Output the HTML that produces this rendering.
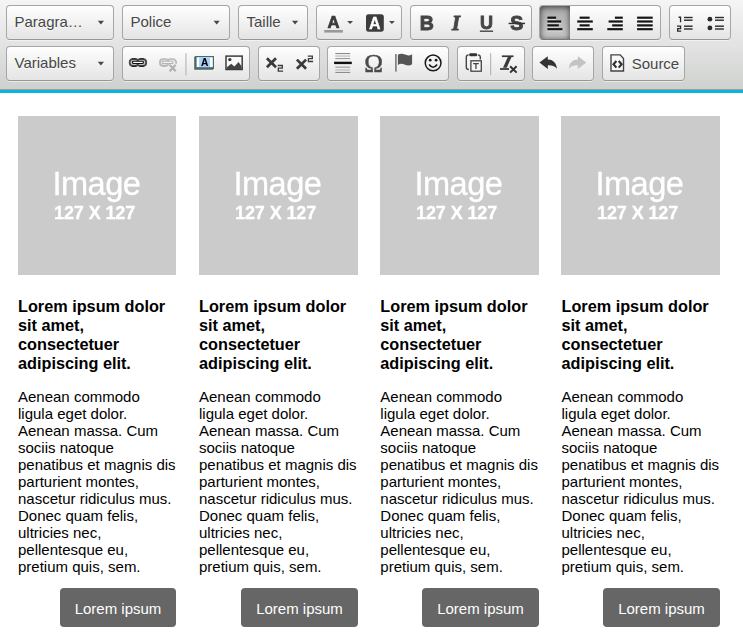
<!DOCTYPE html>
<html lang="fr">
<head>
<meta charset="utf-8">
<title>Editor</title>
<style>
html,body{margin:0;padding:0;background:#fff;}
body{width:743px;height:638px;overflow:hidden;position:relative;font-family:"Liberation Sans",Arial,Helvetica,sans-serif;}
#top{position:absolute;left:0;top:0;width:743px;height:89px;background:linear-gradient(to bottom,#f5f5f5 0,#cfd1cf 100%);}
#blue{position:absolute;left:0;top:89px;width:743px;height:4px;background:linear-gradient(to bottom,#a39c9b 0,#a39c9b 1px,#0fb4da 1px,#0fb4da 2px,#05b6de 2px,#05b6de 4px);}
.grp{position:absolute;height:33px;box-sizing:content-box;border:1px solid #a6a6a6;border-bottom-color:#979797;border-radius:4px;
 background:linear-gradient(to bottom,#ffffff,#e4e4e4);box-shadow:0 1px 0 rgba(255,255,255,.5),0 0 2px rgba(255,255,255,.15) inset,0 1px 0 rgba(255,255,255,.15) inset;}
.r1{top:5px}.r2{top:46px}
.txt{position:absolute;left:7.5px;top:-1px;line-height:33px;font-size:15px;color:#474747;text-shadow:0 1px 0 rgba(255,255,255,.5);white-space:nowrap;}
.arr{position:absolute;top:15px;width:0;height:0;border-left:4px solid transparent;border-right:4px solid transparent;border-top:4px solid #474747;}
.ico{position:absolute;top:6px;width:20px;height:20px;}
.on{position:absolute;top:0;left:0;width:30px;height:33px;border-radius:3px 0 0 3px;background:linear-gradient(to bottom,#aaaaaa,#cacaca);box-shadow:0 1px 6px rgba(0,0,0,.7) inset,0 1px 0 rgba(0,0,0,.2);}
.sep{position:absolute;top:7px;width:1px;height:20px;background:#c0c0c0;}
.col{position:absolute;top:116px;width:159px;}
.ph{width:159px;height:159px;background:#cbcbcb;position:relative;color:#fff;}
.ph .a{position:absolute;left:34.5px;top:50px;font-size:32.6px;line-height:36px;letter-spacing:-0.55px;filter:blur(0.45px)}
.ph .b{position:absolute;left:36px;top:85.5px;font-size:18px;line-height:22px;font-weight:bold;letter-spacing:-0.1px;filter:blur(0.45px)}
h3{margin:0;white-space:nowrap;position:absolute;top:181px;left:0;font-size:16.25px;line-height:18.75px;font-weight:bold;color:#000;width:160px;}
p{margin:0;white-space:nowrap;position:absolute;top:272px;left:0;font-size:15px;line-height:17px;color:#000;width:162px;}
.btn{position:absolute;top:472px;left:42px;width:117px;height:39px;border-radius:4px;background:#666;color:#fff;font-size:15px;line-height:41px;text-align:center;}
.l4{position:relative;top:1px}
.c3 h3,.c3 p{left:0.3px}.c4 h3,.c4 p{left:0.5px}
.ph span{-webkit-text-stroke:0.3px #fff}
.c1 .ph{width:158px}.c1 .btn{width:116px}
</style>
</head>
<body>
<div id="top"></div>
<div id="blue"></div>

<div class="grp r1" style="left:6px;width:106px"><span class="txt">Paragra…</span></div>
<div class="grp r1" style="left:122px;width:106px"><span class="txt">Police</span></div>
<div class="grp r1" style="left:238px;width:68px"><span class="txt">Taille</span></div>
<div class="grp r1" style="left:316px;width:84px"></div>
<div class="grp r1" style="left:410px;width:120px"></div>
<div class="grp r1" style="left:539px;width:120px"><span class="on"></span></div>
<div class="grp r1" style="left:669px;width:60px"></div>

<div class="grp r2" style="left:6px;width:106px"><span class="txt">Variables</span></div>
<div class="grp r2" style="left:122px;width:126px"></div>
<div class="grp r2" style="left:258px;width:60px"></div>
<div class="grp r2" style="left:327px;width:120px"></div>
<div class="grp r2" style="left:457px;width:66px"></div>
<div class="grp r2" style="left:532px;width:60px"></div>
<div class="grp r2" style="left:602px;width:81px"><span class="txt" style="left:28.7px;top:0">Source</span></div>


<svg id="icons" width="743" height="89" viewBox="0 0 743 89" style="position:absolute;left:0;top:0;overflow:visible">
<g style="filter:blur(0.35px)">
<g fill="#474747">
<path d="M97.8 20.8h6.2l-3.1 3.6z"/>
<path d="M213.6 20.8h6.2l-3.1 3.6z"/>
<path d="M292 20.8h6.2l-3.1 3.6z"/>
<path d="M97.8 61.8h6.2l-3.1 3.6z"/>
</g>
<!-- text color -->
<text x="333.4" y="27.6" font-family="Liberation Sans, sans-serif" font-weight="bold" font-size="16.6" text-anchor="middle" fill="#3a3a3a" stroke="#3a3a3a" stroke-width="0.7">A</text>
<rect x="324.2" y="30" width="18.7" height="2.6" fill="#999"/>
<path d="M347.2 21h5.8l-2.9 3z" fill="#474747"/>
<!-- bg color -->
<rect x="366" y="14.2" width="17.8" height="17.5" rx="2.6" fill="#3c3c3c"/>
<text x="374.9" y="29.3" font-family="Liberation Sans, sans-serif" font-weight="bold" font-size="16" text-anchor="middle" fill="#fff" stroke="#fff" stroke-width="0.3">A</text>
<path d="M389 21h5.8l-2.9 3z" fill="#474747"/>
<!-- B I U S -->
<text x="426.8" y="30" font-family="Liberation Sans, sans-serif" font-weight="bold" font-size="19.5" text-anchor="middle" fill="#444" stroke="#444" stroke-width="0.9">B</text>
<text x="455.9" y="30" font-family="Liberation Serif, serif" font-weight="bold" font-style="italic" font-size="20.5" text-anchor="middle" fill="#444" stroke="#444" stroke-width="0.9">I</text>
<text x="486.5" y="28.6" font-family="Liberation Sans, sans-serif" font-weight="bold" font-size="18" text-anchor="middle" fill="#444" stroke="#444" stroke-width="0.8">U</text>
<rect x="479.9" y="30.5" width="13.2" height="1.4" fill="#444"/>
<text x="516.8" y="30" font-family="Liberation Sans, sans-serif" font-weight="bold" font-size="19.5" text-anchor="middle" fill="#444" stroke="#444" stroke-width="0.9">S</text>
<rect x="508.6" y="22.7" width="16.4" height="1.5" fill="#333"/>
<!-- align left -->
<g fill="#fff" opacity="0.8">
<rect x="547.4" y="18.7" width="8.7" height="1"/><rect x="547.4" y="22.5" width="13.8" height="1"/><rect x="547.4" y="26.4" width="11.4" height="1"/><rect x="547.4" y="30.2" width="15.0" height="1"/>
<rect x="579.6" y="18.7" width="10.0" height="1"/><rect x="577.2" y="22.5" width="15.6" height="1"/><rect x="579.6" y="26.4" width="10.0" height="1"/><rect x="577.2" y="30.2" width="15.6" height="1"/>
<rect x="614.9" y="18.7" width="7.9" height="1"/><rect x="608.6" y="22.5" width="14.2" height="1"/><rect x="612.2" y="26.4" width="10.6" height="1"/><rect x="607.3" y="30.2" width="15.5" height="1"/>
<rect x="637.1" y="18.7" width="15.6" height="1"/><rect x="637.1" y="22.5" width="15.6" height="1"/><rect x="637.1" y="26.4" width="15.6" height="1"/><rect x="637.1" y="30.2" width="15.6" height="1"/>
</g>
<g fill="#151515">
<rect x="547.4" y="16.6" width="8.7" height="2.2"/><rect x="547.4" y="20.4" width="13.8" height="2.2"/><rect x="547.4" y="24.3" width="11.4" height="2.2"/><rect x="547.4" y="28.1" width="15.0" height="2.2"/>
<rect x="579.6" y="16.6" width="10.0" height="2.2"/><rect x="577.2" y="20.4" width="15.6" height="2.2"/><rect x="579.6" y="24.3" width="10.0" height="2.2"/><rect x="577.2" y="28.1" width="15.6" height="2.2"/>
<rect x="614.9" y="16.6" width="7.9" height="2.2"/><rect x="608.6" y="20.4" width="14.2" height="2.2"/><rect x="612.2" y="24.3" width="10.6" height="2.2"/><rect x="607.3" y="28.1" width="15.5" height="2.2"/>
<rect x="637.1" y="16.6" width="15.6" height="2.2"/><rect x="637.1" y="20.4" width="15.6" height="2.2"/><rect x="637.1" y="24.3" width="15.6" height="2.2"/><rect x="637.1" y="28.1" width="15.6" height="2.2"/>
</g>
<!-- numbered list -->
<g fill="#2a2a2a">
<path d="M678.6 16.6h2.6v5.7h-1.3v-4.4h-1.3z"/>
<path d="M677 25.5h4.2v3.7h-2.9v1.3h2.9v1.3h-4.2v-3.8h2.9v-1.2h-2.9z"/>
<rect x="684" y="16.8" width="8.6" height="1.4"/><rect x="684" y="19.5" width="8.6" height="1.4"/>
<rect x="684" y="25.5" width="8.6" height="1.4"/><rect x="684" y="28.3" width="8.6" height="1.4"/>
<circle cx="709.9" cy="19.2" r="2.4"/><circle cx="709.9" cy="27.9" r="2.4"/>
<rect x="715" y="16.8" width="8.9" height="1.4"/><rect x="715" y="19.5" width="8.9" height="1.4"/>
<rect x="715" y="25.5" width="8.9" height="1.4"/><rect x="715" y="28.3" width="8.9" height="1.4"/>
</g>

<!-- link -->
<rect x="129.7" y="59.1" width="8.9" height="6.9" rx="3.2" fill="#c4c4c4" stroke="#4a4a4a" stroke-width="1.8"/>
<rect x="137.3" y="59.1" width="8.9" height="6.9" rx="3.2" fill="#c4c4c4" stroke="#4a4a4a" stroke-width="1.8"/>
<path d="M131.8 58.7h4.6M139.5 58.7h4.6M131.8 66.3h4.6M139.5 66.3h4.6" stroke="#111" stroke-width="0.8" fill="none"/>
<rect x="132.6" y="61.2" width="10.7" height="2.3" rx="0.8" fill="#fff" stroke="#111" stroke-width="1.15"/>
<!-- unlink -->
<g opacity="0.3">
<rect x="159.9" y="59.1" width="8.6" height="6.9" rx="3.2" fill="#bbb" stroke="#3a3a3a" stroke-width="1.8"/>
<path d="M167.5 61.5V62.3A3.2 3.2 0 0 1 170.7 59.1h2.2a3.2 3.2 0 0 1 3.2 3.2v1.4" fill="none" stroke="#3a3a3a" stroke-width="1.8"/>
<rect x="162.6" y="61.3" width="10.4" height="2.2" rx="0.8" fill="#fff" stroke="#222" stroke-width="1.1"/>
<path d="M169.7 64.8l6 6.4M175.7 64.8l-6 6.4" fill="none" stroke="#2a2a2a" stroke-width="2.3"/>
</g>
<rect x="185.4" y="53.2" width="1.1" height="22.2" fill="#b4b4b4"/>
<!-- textfield -->
<path d="M195.4 55.9H214V68.6L212.8 69.8H194.2V57.1Z" fill="#4b6a67"/>
<rect x="196.6" y="57.2" width="16.2" height="9.9" fill="#fff"/>
<rect x="199.1" y="57.2" width="10.9" height="9.9" fill="#a9d1fb"/>
<text x="204.6" y="66" font-family="Liberation Sans, sans-serif" font-weight="bold" font-size="10.2" text-anchor="middle" fill="#000" stroke="#000" stroke-width="0.12">A</text>
<!-- image -->
<rect x="226" y="56.1" width="16.2" height="13.4" fill="#fafafa" stroke="#3d3d3d" stroke-width="1.5"/>
<circle cx="229.8" cy="59.6" r="1.7" fill="#3d3d3d"/>
<path d="M226.6 69.2V67.5L231.2 63.7L234.4 66.6L238.5 62.1L241.6 66.2V69.2Z" fill="#444"/>
<!-- subscript -->
<path d="M266.9 58.3l9.1 8.9M276 58.3l-9.1 8.9" stroke="#3a3a3a" stroke-width="2.7" fill="none"/>
<path d="M277.7 65.5h4.6v2.7h-4.0v2.9h4.8" stroke="#3a3a3a" stroke-width="1.3" fill="none"/>
<!-- superscript -->
<path d="M296.9 59.6l9.2 9.1M306.1 59.6l-9.2 9.1" stroke="#3a3a3a" stroke-width="2.7" fill="none"/>
<path d="M307.8 56.1h4.5v2.6h-3.9v2.8h4.7" stroke="#3a3a3a" stroke-width="1.3" fill="none"/>
<!-- hr -->
<rect x="335.3" y="53" width="14.9" height="1.1" fill="#8c8c8c"/><rect x="335.3" y="55.5" width="14.9" height="1.1" fill="#b8b8b8"/><rect x="335.3" y="58" width="14.9" height="1.1" fill="#999"/>
<rect x="334.1" y="61.7" width="17.7" height="2.4" fill="#111"/>
<rect x="335.3" y="66.6" width="14.9" height="1.1" fill="#999"/><rect x="335.3" y="69.4" width="14.9" height="1.1" fill="#b8b8b8"/><rect x="335.3" y="71.9" width="14.9" height="1.1" fill="#8c8c8c"/>
<!-- omega -->
<text x="373.7" y="71.6" font-family="Liberation Serif, serif" font-size="25" text-anchor="middle" fill="#4a4a4a" stroke="#4a4a4a" stroke-width="0.45" textLength="18.8" lengthAdjust="spacingAndGlyphs">Ω</text>
<!-- flag -->
<rect x="395.1" y="54" width="1.6" height="17.6" fill="#7a7a7a"/>
<path d="M397.9 54.8C400 53.4 402.5 53.4 405 54.6C407.5 55.8 410 55.6 412.1 54.2V64.3C410 65.7 407.5 65.9 405 64.7C402.5 63.5 400 63.5 397.9 64.9Z" fill="#555"/>
<!-- smiley -->
<circle cx="433.1" cy="62.9" r="7.85" fill="none" stroke="#1a1a1a" stroke-width="1.5"/>
<circle cx="430.2" cy="60.2" r="1.4" fill="#1a1a1a"/><circle cx="436.1" cy="60.2" r="1.4" fill="#1a1a1a"/>
<path d="M429.1 64.5Q433.1 70.1 437.1 64.5" fill="none" stroke="#1a1a1a" stroke-width="1.6"/>
<!-- paste text -->
<path d="M468.6 54.9Q466.3 55 466.3 57.2V67.2Q466.3 69.4 468.8 69.5M477.8 54.9Q480.3 55 480.3 57.2V59.6" fill="none" stroke="#444" stroke-width="1.4"/>
<rect x="469.2" y="53.2" width="7.9" height="3.1" rx="1.2" fill="#333"/>
<rect x="470.9" y="60.8" width="10.4" height="10.4" fill="#f6f6f6" stroke="#444" stroke-width="1.3"/>
<path d="M473.1 63h5.7v1.3h-2.2v4.7h-1.3v-4.7h-2.2z" fill="#444"/>
<rect x="490.1" y="53.2" width="1.1" height="22.2" fill="#b4b4b4"/>
<!-- remove format -->
<rect x="501.9" y="55.4" width="11.6" height="1.7" fill="#3a3a3a"/>
<path d="M507.8 57h3.7l-4.8 10.8h-3.7z" fill="#3a3a3a"/>
<rect x="500" y="68.1" width="9" height="1.8" fill="#3a3a3a"/>
<path d="M510.1 66.2l6.5 6.4M516.6 66.2l-6.5 6.4" stroke="#333" stroke-width="2" fill="none"/>
<!-- undo / redo -->
<path d="M539.4 62.5L547.8 56.3V59.6C553 59.6 556.5 63 556.9 68.8C554.5 66 551.5 65.2 547.8 65.4V69Z" fill="#333"/>
<path d="M586.3 62.5L577.9 56.3V59.6C572.7 59.6 569.2 63 568.8 68.8C571.2 66 574.2 65.2 577.9 65.4V69Z" fill="#c3c3c3"/>
<!-- source -->
<path d="M611 54.9h9.2l3.3 3.7v12.4h-12.5z" fill="#f8f8f8" stroke="#444" stroke-width="1.4"/>
<path d="M616.4 61l-2.9 3.3l2.9 3.3M618.7 61l2.9 3.3l-2.9 3.3" fill="none" stroke="#2e2e2e" stroke-width="2.1"/>
</g>
</svg>

<div class="col c1" style="left:18px"><div class="ph"><span class="a">Image</span><span class="b">127 X 127</span></div>
<h3>Lorem ipsum dolor<br>sit amet,<br>consectetuer<br><span class="l4">adipiscing elit.</span></h3>
<p>Aenean commodo<br>ligula eget dolor.<br>Aenean massa. Cum<br>sociis natoque<br>penatibus et magnis dis<br>parturient montes,<br>nascetur ridiculus mus.<br>Donec quam felis,<br>ultricies nec,<br>pellentesque eu,<br>pretium quis, sem.</p>
<div class="btn">Lorem ipsum</div></div>

<div class="col" style="left:199px"><div class="ph"><span class="a">Image</span><span class="b">127 X 127</span></div>
<h3>Lorem ipsum dolor<br>sit amet,<br>consectetuer<br><span class="l4">adipiscing elit.</span></h3>
<p>Aenean commodo<br>ligula eget dolor.<br>Aenean massa. Cum<br>sociis natoque<br>penatibus et magnis dis<br>parturient montes,<br>nascetur ridiculus mus.<br>Donec quam felis,<br>ultricies nec,<br>pellentesque eu,<br>pretium quis, sem.</p>
<div class="btn">Lorem ipsum</div></div>

<div class="col c3" style="left:380px"><div class="ph"><span class="a">Image</span><span class="b">127 X 127</span></div>
<h3>Lorem ipsum dolor<br>sit amet,<br>consectetuer<br><span class="l4">adipiscing elit.</span></h3>
<p>Aenean commodo<br>ligula eget dolor.<br>Aenean massa. Cum<br>sociis natoque<br>penatibus et magnis dis<br>parturient montes,<br>nascetur ridiculus mus.<br>Donec quam felis,<br>ultricies nec,<br>pellentesque eu,<br>pretium quis, sem.</p>
<div class="btn">Lorem ipsum</div></div>

<div class="col c4" style="left:561px"><div class="ph"><span class="a">Image</span><span class="b">127 X 127</span></div>
<h3>Lorem ipsum dolor<br>sit amet,<br>consectetuer<br><span class="l4">adipiscing elit.</span></h3>
<p>Aenean commodo<br>ligula eget dolor.<br>Aenean massa. Cum<br>sociis natoque<br>penatibus et magnis dis<br>parturient montes,<br>nascetur ridiculus mus.<br>Donec quam felis,<br>ultricies nec,<br>pellentesque eu,<br>pretium quis, sem.</p>
<div class="btn">Lorem ipsum</div></div>
</body>
</html>
